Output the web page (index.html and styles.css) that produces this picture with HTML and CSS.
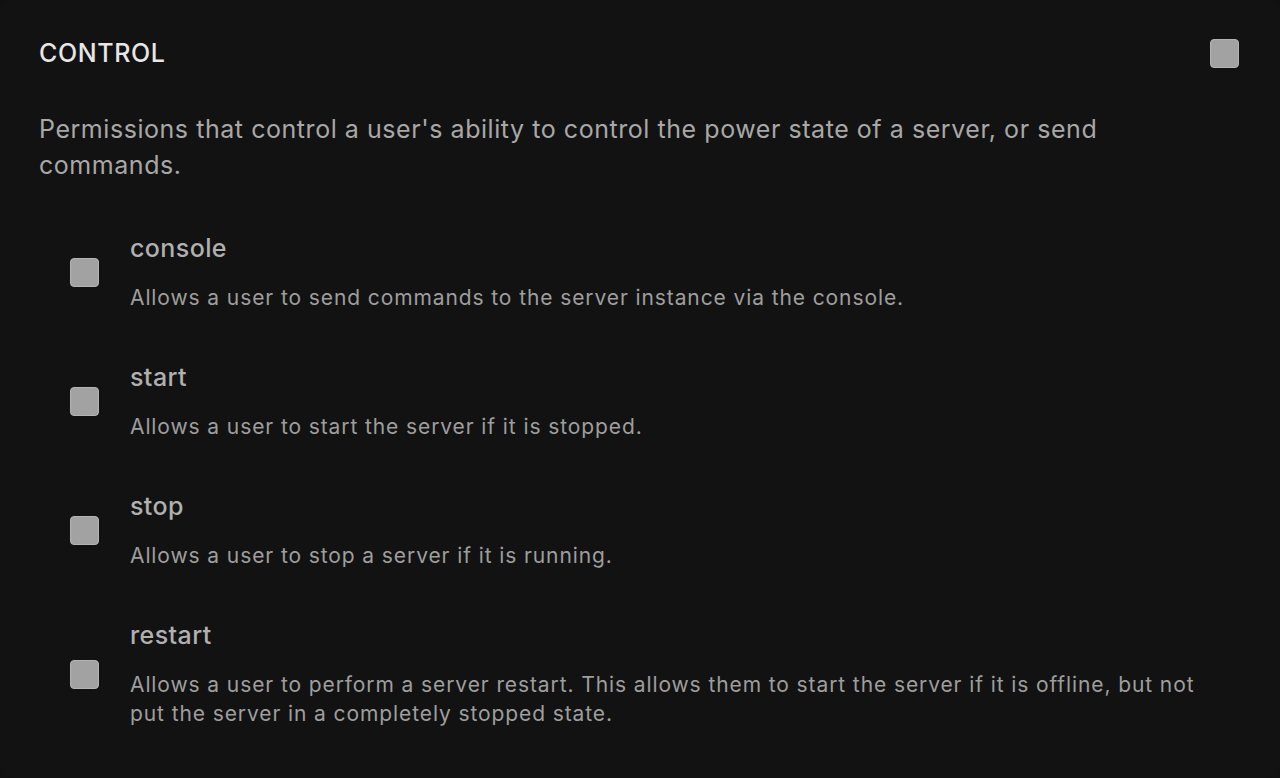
FILE: index.html
```html
<!DOCTYPE html>
<html>
<head>
<meta charset="utf-8">
<link rel="stylesheet" href="styles.css">
</head>
<body>
<div class="card">
  <div class="head">
    <h2 class="title">CONTROL</h2>
    <span class="box box-head"></span>
  </div>
  <p class="lead">Permissions that control a user's ability to control the power state of a server, or send commands.</p>
  <ul class="perms">
    <li class="perm">
      <span class="box"></span>
      <div class="text">
        <div class="name">console</div>
        <div class="desc">Allows a user to send commands to the server instance via the console.</div>
      </div>
    </li>
    <li class="perm">
      <span class="box"></span>
      <div class="text">
        <div class="name">start</div>
        <div class="desc">Allows a user to start the server if it is stopped.</div>
      </div>
    </li>
    <li class="perm">
      <span class="box"></span>
      <div class="text">
        <div class="name">stop</div>
        <div class="desc">Allows a user to stop a server if it is running.</div>
      </div>
    </li>
    <li class="perm">
      <span class="box"></span>
      <div class="text">
        <div class="name">restart</div>
        <div class="desc">Allows a user to perform a server restart. This allows them to start the server if it is offline, but not put the server in a completely stopped state.</div>
      </div>
    </li>
  </ul>
</div>
</body>
</html>
```
FILE: styles.css
```css
html, body {
  margin: 0;
  padding: 0;
  background: #111111;
}
body {
  font-family: Inter, "Noto Sans", sans-serif;
  width: 1280px;
  height: 778px;
  overflow: hidden;
}
.card {
  background: #121212;
  border-radius: 12px;
  padding: 36px 41px 0 39px;
  height: 778px;
  box-sizing: border-box;
}
.head {
  display: flex;
  justify-content: space-between;
  align-items: center;
}
.title {
  margin: 0;
  font-size: 25px;
  font-weight: 500;
  color: #e6e6e6;
  letter-spacing: 0.6px;
  line-height: 34px;
}
.box {
  display: block;
  width: 27px;
  height: 27px;
  background: #a2a2a2;
  border: 1px solid #b4b4b4;
  border-radius: 4px;
  flex: none;
}
.lead {
  margin: 41px 0 0;
  font-size: 25px;
  line-height: 36px;
  color: #a8a8a8;
  letter-spacing: 0.55px;
  max-width: 1100px;
}
.perms {
  list-style: none;
  margin: 50px 0 0;
  padding: 0 0 0 31px;
  display: flex;
  flex-direction: column;
  gap: 50px;
}
.perm {
  display: flex;
  align-items: center;
  gap: 31px;
}
.name {
  font-size: 25px;
  font-weight: 500;
  color: #b0b0b0;
  line-height: 30px;
  letter-spacing: 0.4px;
}
.desc {
  margin-top: 20px;
  font-size: 21px;
  line-height: 29px;
  color: #9e9e9e;
  letter-spacing: 0.9px;
  max-width: 1080px;
}
```
